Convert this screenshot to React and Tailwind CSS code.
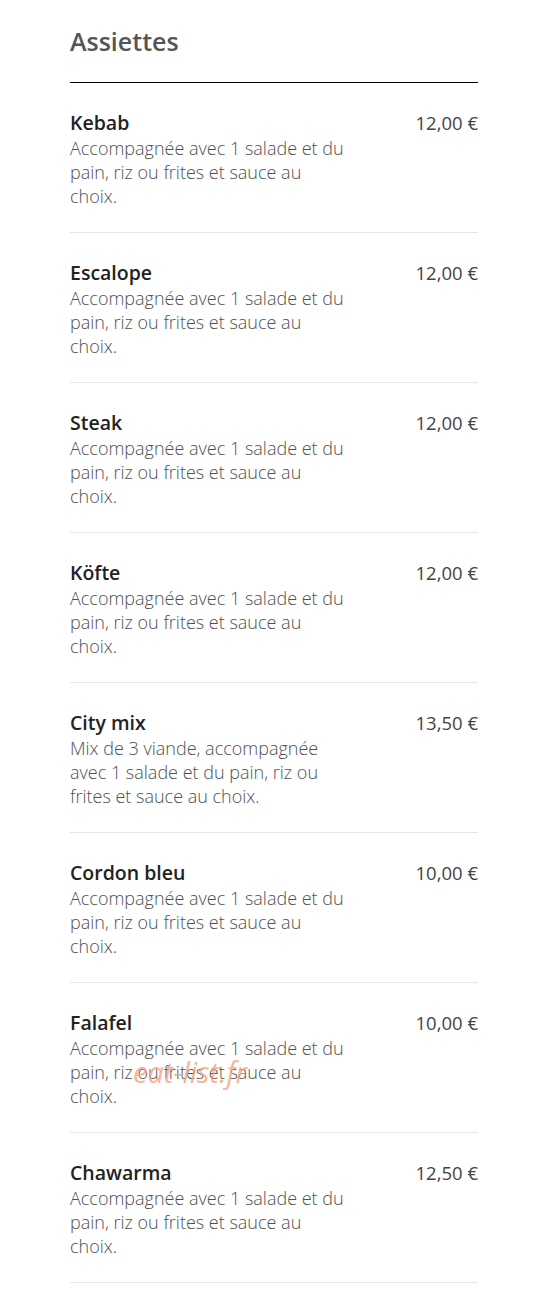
const items = [
  { name: 'Kebab', price: '12,00 €' },
  { name: 'Escalope', price: '12,00 €' },
  { name: 'Steak', price: '12,00 €' },
  { name: 'Köfte', price: '12,00 €' },
  {
    name: 'City mix',
    price: '13,50 €',
    desc: 'Mix de 3 viande, accompagnée avec 1 salade et du pain, riz ou frites et sauce au choix.',
  },
  { name: 'Cordon bleu', price: '10,00 €' },
  { name: 'Falafel', price: '10,00 €', mark: true },
  { name: 'Chawarma', price: '12,50 €' },
];

const defaultDesc = 'Accompagnée avec 1 salade et du pain, riz ou frites et sauce au choix.';

export default function App() {
  return (
    <div className="min-h-[1295px] bg-white pr-[75px] pl-[70px] pt-[25px]" style={{ fontFamily: '"Open Sans", sans-serif' }}>
      <h2 className="border-b border-black pb-[25px] text-[25px] leading-8 font-semibold text-[#555]">
        Assiettes
      </h2>
      <ul>
        {items.map((item) => (
          <li key={item.name} className="relative flex justify-between border-b border-[#e6e6e6] pt-[27px] pb-[24px]">
            <div className="w-[278px]">
              <div className="text-[19.5px] leading-[26px] font-semibold text-[#222]">{item.name}</div>
              <p className="text-[18px] leading-6 font-light text-[#505050]">{item.desc || defaultDesc}</p>
            </div>
            <div className="text-[18.5px] leading-[26px] font-medium text-[#444]">{item.price}</div>
            {item.mark && (
              <span className="absolute top-[71px] left-[63px] text-[29px] leading-9 italic text-[#f5a27c]/80">
                eat-list.fr
              </span>
            )}
          </li>
        ))}
      </ul>
    </div>
  );
}
